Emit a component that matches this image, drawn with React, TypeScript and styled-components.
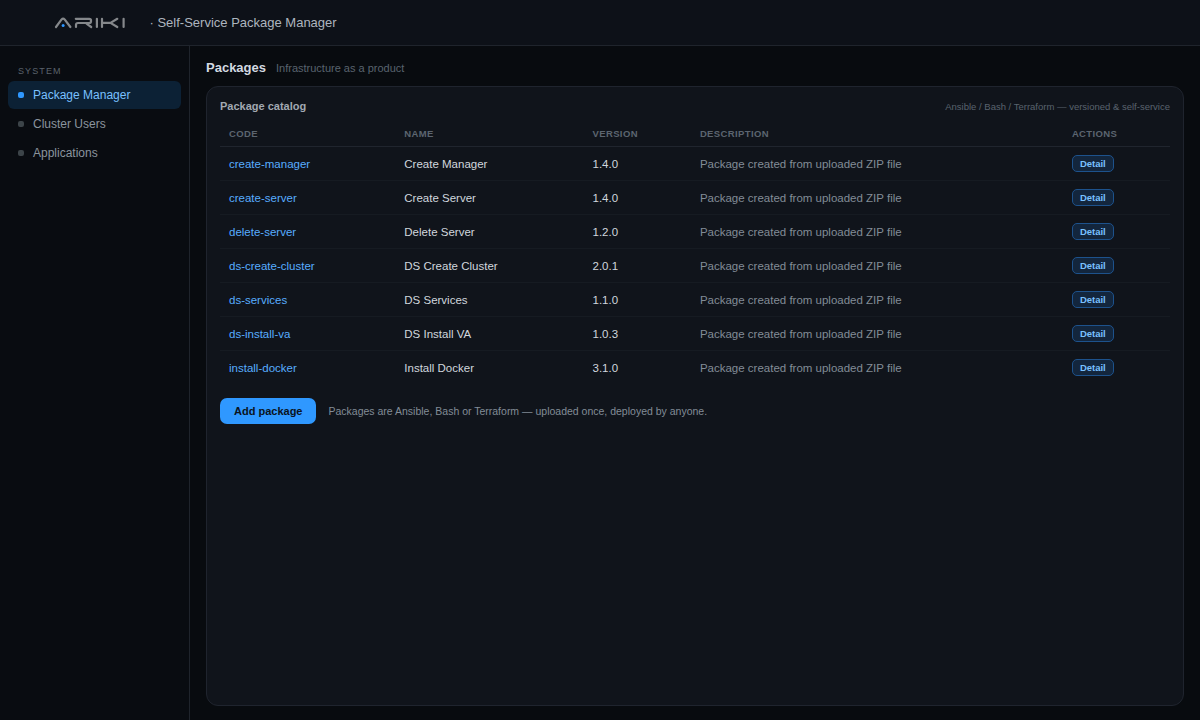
import React from "react";
import styled, { createGlobalStyle } from "styled-components";

const GlobalStyle = createGlobalStyle`
  * { box-sizing: border-box; }
  body {
    margin: 0;
    background: #080b0f;
    color: #d0d7de;
    font-family: "Liberation Sans", Arial, sans-serif;
  }
`;

const Shell = styled.div`
  height: 100vh;
  display: flex;
  flex-direction: column;
  overflow: hidden;
`;

const Header = styled.header`
  height: 46px;
  flex: none;
  display: flex;
  align-items: center;
  padding-left: 50px;
  background: #0d1118;
  border-bottom: 1px solid #1f242c;
`;

const LogoMark = styled.svg`
  display: block;
  width: 80px;
  height: 20px;
`;

const Product = styled.div`
  margin-left: 19.5px;
  font-size: 13px;
  line-height: 16px;
  color: #adb5bf;
`;

const Body = styled.div`
  flex: 1;
  min-height: 0;
  display: flex;
`;

const Sidebar = styled.nav`
  width: 190px;
  flex: none;
  padding: 20px 8px;
  display: flex;
  flex-direction: column;
  gap: 1px;
  background: #090c11;
  border-right: 1px solid #1f242c;
`;

const SidebarLabel = styled.div`
  padding: 0 10px 4px;
  font-size: 9px;
  line-height: 10px;
  letter-spacing: 1.1px;
  color: #5a626c;
`;

const NavItem = styled.a<{ $active?: boolean }>`
  height: 28px;
  display: flex;
  align-items: center;
  gap: 9px;
  padding: 0 10px;
  border-radius: 6px;
  font-size: 12px;
  color: ${(p) => (p.$active ? "#79c0ff" : "#8b949e")};
  background: ${(p) => (p.$active ? "#0c2135" : "transparent")};
`;

const NavDot = styled.span<{ $active?: boolean }>`
  width: 6px;
  height: 6px;
  border-radius: 2px;
  background: ${(p) => (p.$active ? "#2f98ff" : "#3c4449")};
`;

const Main = styled.main`
  flex: 1;
  min-width: 0;
  display: flex;
  flex-direction: column;
  padding: 14px 16px;
`;

const PageHead = styled.div`
  display: flex;
  align-items: baseline;
  gap: 10px;
  height: 26px;
`;

const PageTitle = styled.h1`
  margin: 0;
  font-size: 13px;
  line-height: 16px;
  font-weight: 700;
  color: #d3dae1;
`;

const PageNote = styled.span`
  font-size: 11px;
  color: #59636e;
`;

const Panel = styled.section`
  flex: 1;
  padding: 12px 13px;
  background: #10141b;
  border: 1px solid #1f242e;
  border-radius: 12px;
`;

const PanelHead = styled.div`
  height: 24px;
  display: flex;
  align-items: baseline;
  justify-content: space-between;
`;

const PanelTitle = styled.h2`
  margin: 0;
  font-size: 11px;
  line-height: 14px;
  font-weight: 700;
  color: #a2a9b2;
`;

const PanelNote = styled.span`
  font-size: 9.5px;
  color: #59636e;
`;

const TableRow = styled.div<{ $head?: boolean }>`
  display: grid;
  grid-template-columns: 175.3px 188.2px 107.4px 372px 1fr;
  align-items: center;
  height: ${(p) => (p.$head ? "24px" : "34px")};
  border-bottom: 1px solid ${(p) => (p.$head ? "#20252e" : "#161b22")};
  &:last-child { border-bottom-color: transparent; }
`;

const HeadCell = styled.div`
  padding: 0 9px 2px;
  font-size: 9.5px;
  line-height: 11px;
  font-weight: 700;
  letter-spacing: 0.38px;
  color: #5c6570;
`;

const Cell = styled.div<{ $tone?: "link" | "muted" }>`
  padding: 0 9px;
  font-size: 11.5px;
  line-height: 14px;
  color: ${(p) => (p.$tone === "link" ? "#58adff" : p.$tone === "muted" ? "#828c97" : "#d0d7de")};
`;

const DetailButton = styled.button`
  display: block;
  height: 17px;
  padding: 0 7px;
  font: 700 9.5px/15px "Liberation Sans", Arial, sans-serif;
  color: #79c0ff;
  background: #13263d;
  border: 1px solid #1d528c;
  border-radius: 5px;
`;

const PanelFoot = styled.div`
  display: flex;
  align-items: center;
  gap: 12px;
  margin-top: 13px;
`;

const AddButton = styled.button`
  height: 26px;
  padding: 0 14px;
  border: 0;
  border-radius: 7px;
  font: 700 11px/14px "Liberation Sans", Arial, sans-serif;
  color: #0a1320;
  background: #2f98ff;
`;

const FootNote = styled.span`
  font-size: 10.5px;
  color: #828c97;
`;

const packages = [
  ["create-manager", "Create Manager", "1.4.0"],
  ["create-server", "Create Server", "1.4.0"],
  ["delete-server", "Delete Server", "1.2.0"],
  ["ds-create-cluster", "DS Create Cluster", "2.0.1"],
  ["ds-services", "DS Services", "1.1.0"],
  ["ds-install-va", "DS Install VA", "1.0.3"],
  ["install-docker", "Install Docker", "3.1.0"],
];

const Logo = () => (
  <LogoMark viewBox="0 0 80 20" role="img" aria-label="ARIKI">
    <g fill="none" stroke="#85888b" strokeWidth="2.2" strokeLinejoin="round" strokeLinecap="round">
      <path d="M6 14 11.6 6.4Q13.1 4.7 14.6 6.4L20.4 14" />
      <path d="M25.8 5.8H39.2Q41 5.8 41 7.4V8.2Q41 10 39.2 10H28Q26 10 26 11.8V14M36.5 10.6 41.2 14" />
      <path d="M46.9 5.8V14M52 5.8V14M52 9.9H60.5M67.3 5.8 60.5 9.9 67.3 14M73.6 5.8V14" />
    </g>
    <circle cx="13.1" cy="12.4" r="1.5" fill="#2f98ff" />
  </LogoMark>
);

export default function App() {
  return (
    <Shell>
      <GlobalStyle />
      <Header>
        <Logo />
        <Product>· Self-Service Package Manager</Product>
      </Header>
      <Body>
        <Sidebar>
          <SidebarLabel>SYSTEM</SidebarLabel>
          {["Package Manager", "Cluster Users", "Applications"].map((label, i) => (
            <NavItem key={label} $active={i === 0}>
              <NavDot $active={i === 0} />
              {label}
            </NavItem>
          ))}
        </Sidebar>
        <Main>
          <PageHead>
            <PageTitle>Packages</PageTitle>
            <PageNote>Infrastructure as a product</PageNote>
          </PageHead>
          <Panel>
            <PanelHead>
              <PanelTitle>Package catalog</PanelTitle>
              <PanelNote>Ansible / Bash / Terraform — versioned &amp; self-service</PanelNote>
            </PanelHead>
            <div>
              <TableRow $head>
                {["CODE", "NAME", "VERSION", "DESCRIPTION", "ACTIONS"].map((h) => (
                  <HeadCell key={h}>{h}</HeadCell>
                ))}
              </TableRow>
              {packages.map(([code, name, version]) => (
                <TableRow key={code}>
                  <Cell $tone="link">{code}</Cell>
                  <Cell>{name}</Cell>
                  <Cell>{version}</Cell>
                  <Cell $tone="muted">Package created from uploaded ZIP file</Cell>
                  <Cell>
                    <DetailButton>Detail</DetailButton>
                  </Cell>
                </TableRow>
              ))}
            </div>
            <PanelFoot>
              <AddButton>Add package</AddButton>
              <FootNote>Packages are Ansible, Bash or Terraform — uploaded once, deployed by anyone.</FootNote>
            </PanelFoot>
          </Panel>
        </Main>
      </Body>
    </Shell>
  );
}
